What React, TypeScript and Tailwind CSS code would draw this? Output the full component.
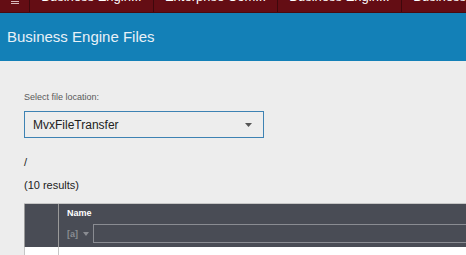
import React from "react";

const tabs = ["Business Engin...", "Enterprise Com...", "Business Engin...", "Business Engin..."];

const App = () => {
  return (
    <div className="w-[466px] h-[255px] overflow-hidden bg-[#ededed] font-['Liberation_Sans',Arial,sans-serif]">
      <div className="flex h-[13px] bg-[#640d14] border-b border-[#4a0a0f] overflow-hidden">
        <div className="w-[30px] shrink-0 flex flex-col items-center gap-[1px] pt-[1px] border-r border-[#3f080c]">
          <div className="w-[8px] h-[1px] bg-[#d9b9bc]" />
          <div className="w-[8px] h-[1px] bg-[#d9b9bc]" />
        </div>
        {tabs.map((t, i) => (
          <div
            key={i}
            className="w-[124px] shrink-0 border-r border-[#3f080c] flex justify-center overflow-hidden"
          >
            <div className="-mt-[10px] text-white text-[13px] leading-[14px] whitespace-nowrap">{t}</div>
          </div>
        ))}
      </div>
      <div className="h-[48px] bg-[#1380b7] flex items-center px-[7px]">
        <h1 className="text-[#e8f1f7] text-[15px] font-normal">Business Engine Files</h1>
      </div>
      <div className="pl-[24px] pt-[31px]">
        <p className="text-[#5a5a5a] text-[9px] leading-[10px]">Select file location:</p>
        <div className="mt-[9px] w-[240px] h-[27px] border border-[#3d82b3] flex items-center justify-between pl-[8px] pr-[11px]">
          <span className="text-[#222] text-[12px]">MvxFileTransfer</span>
          <svg width="7" height="4" viewBox="0 0 7 4">
            <path d="M0 0 L7 0 L3.5 4 Z" fill="#555" />
          </svg>
        </div>
        <p className="mt-[18px] text-[#222] text-[11px] leading-[12px]">/</p>
        <p className="mt-[11px] text-[#222] text-[11px] leading-[12px]">(10 results)</p>
        <div className="mt-[12px] border-t border-[#c6c6c6] bg-[#494c55] flex h-[44px]">
          <div className="w-[35px] border-l border-r border-[#9a9a9a]" />
          <div className="flex-1 pl-[8px] pt-[4px]">
            <p className="text-white text-[9px] font-bold leading-[11px]">Name</p>
            <div className="mt-[5px] flex items-center">
              <span className="text-[#8a8c92] text-[9px] font-bold leading-[10px]">[a]</span>
              <svg className="ml-[5px]" width="6" height="4" viewBox="0 0 6 4">
                <path d="M0 0 L6 0 L3 4 Z" fill="#8a8c92" />
              </svg>
              <div className="ml-[4px] flex-1 h-[19px] border border-[#8a8c92] border-r-0" />
            </div>
          </div>
        </div>
        <div className="flex h-[10px] bg-white">
          <div className="w-[35px] border-l border-r border-[#c6c6c6]" />
        </div>
      </div>
    </div>
  );
};

export default App;
